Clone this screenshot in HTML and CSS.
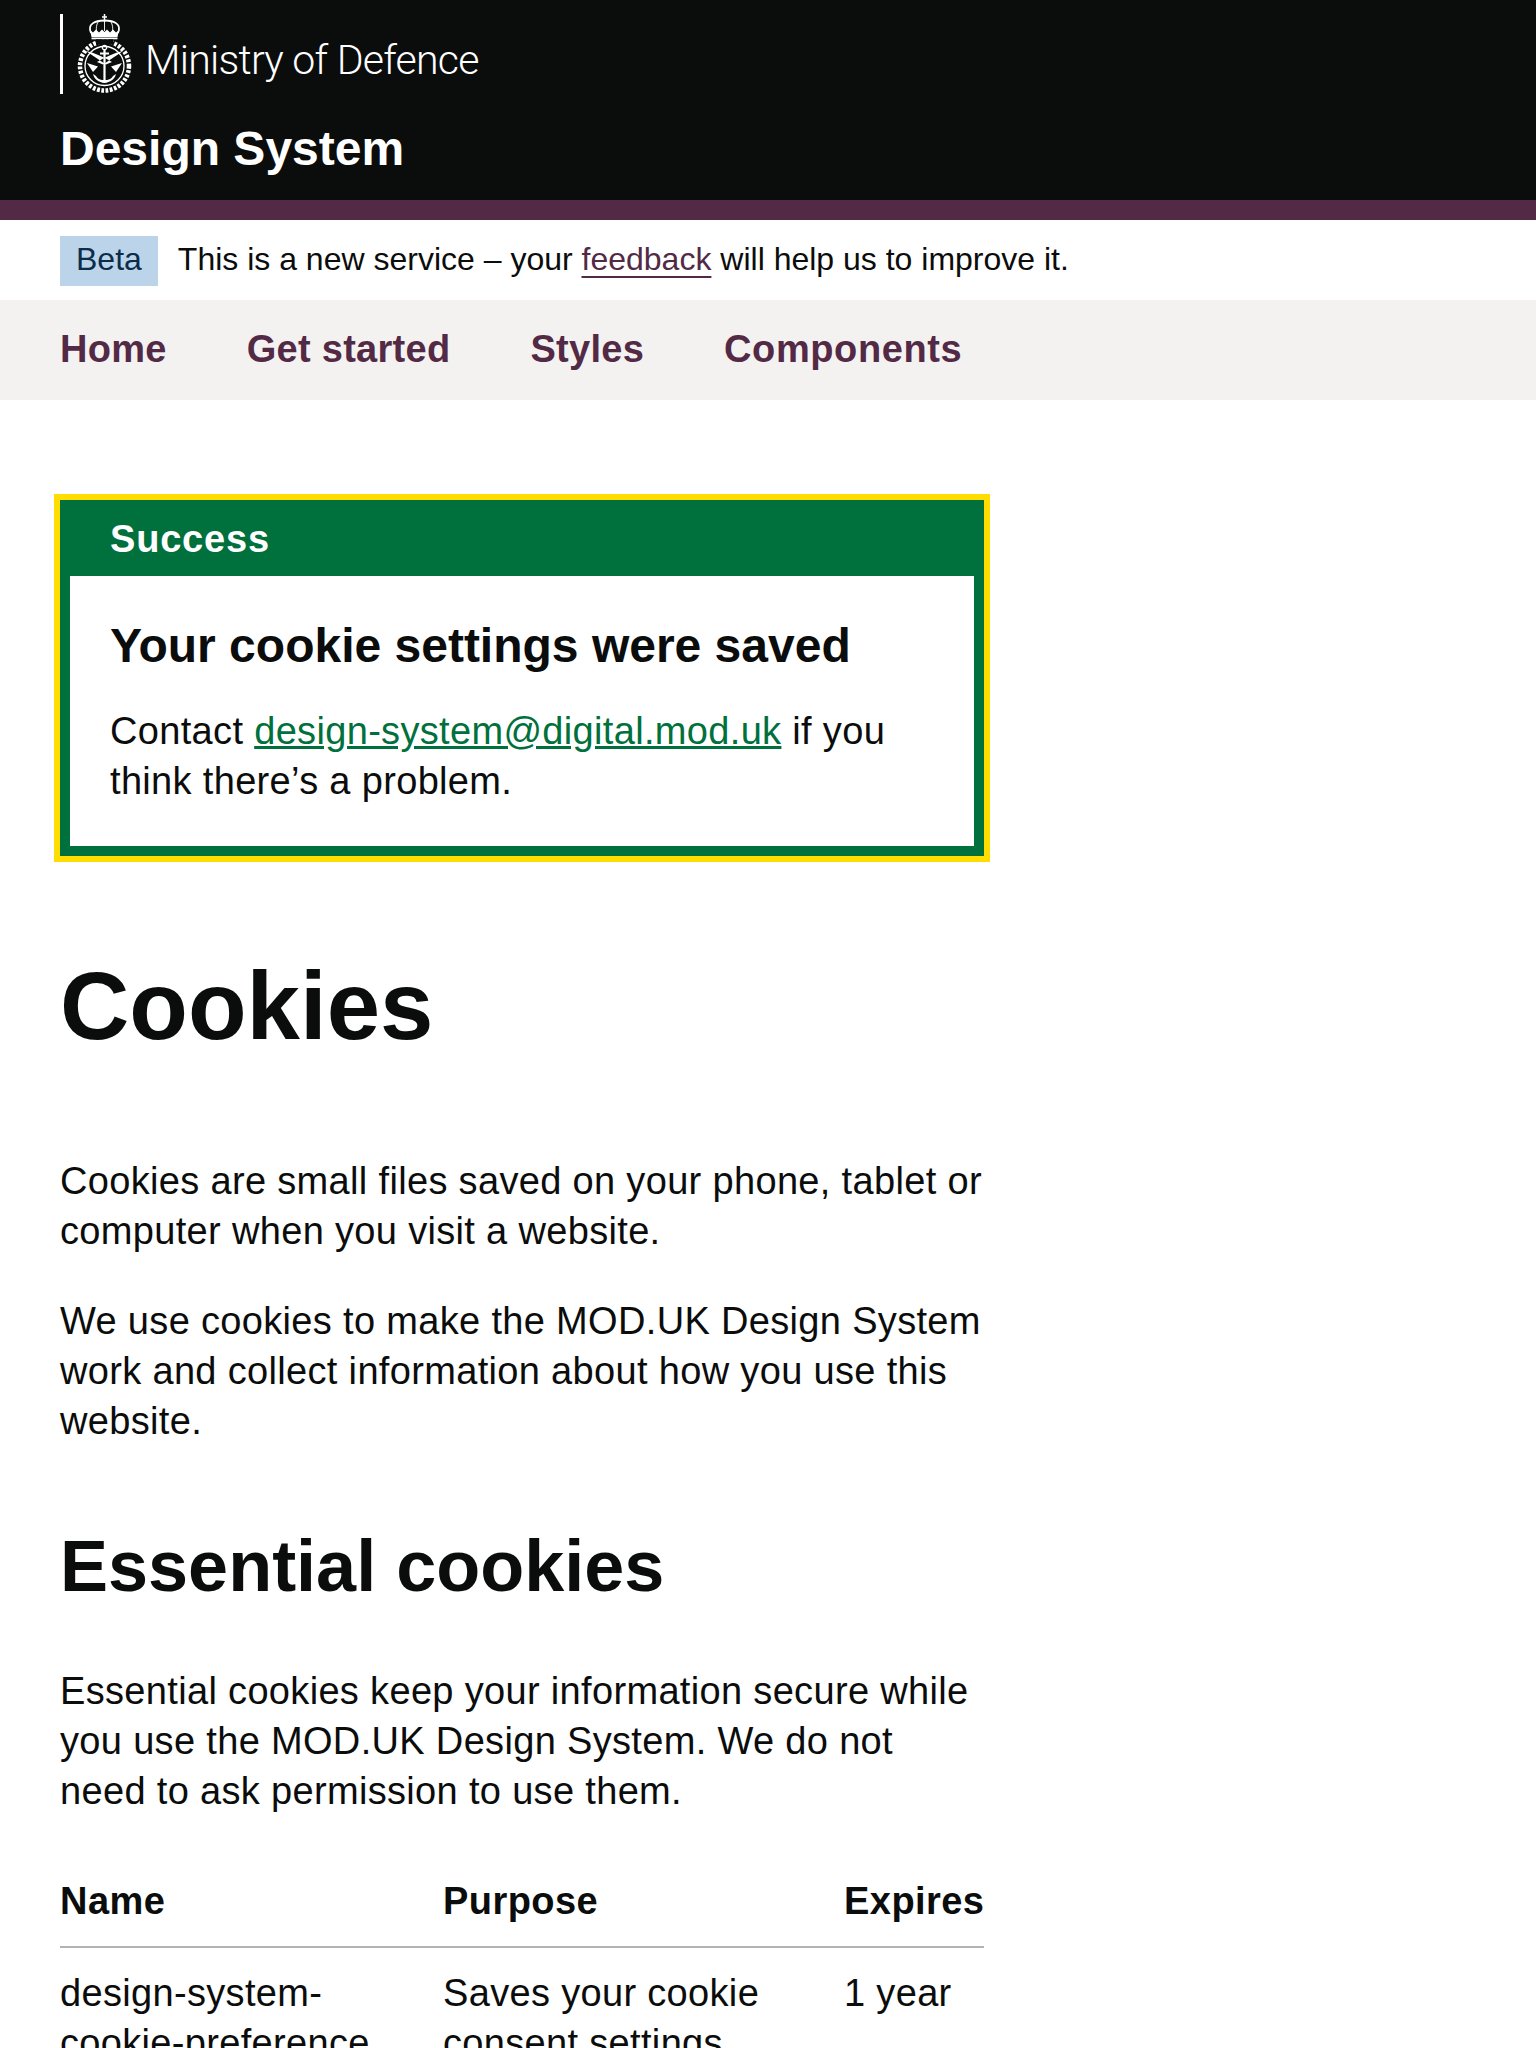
FILE: index.html
```html
<!DOCTYPE html>
<html lang="en">
<head>
    <meta charset="UTF-8">
    <meta name="viewport" content="width=device-width, initial-scale=1.0">
    <title>Cookies - MOD.UK Design System</title>
    <link rel="stylesheet" href="styles.css">
</head>
<body>

    <header class="header">
        <a class="logo" href="#">
            <svg class="crest" viewBox="0 0 56 80" width="56" height="80" aria-hidden="true">
                <!-- crown -->
                <path d="M27.5 0v8M25 3h5" fill="none" stroke="#fff" stroke-width="1.5"/>
                <path d="M14 19C10 10 18 6.500 27.500 6.500S45 10 41 19" fill="none" stroke="#fff" stroke-width="1.800"/>
                <path d="M27.500 8v9M21 8c-1.500 2.500-2 6-1.500 9M34 8c1.500 2.500 2 6 1.500 9" fill="none" stroke="#fff" stroke-width=".9"/>
                <path d="M13 16l3 2.500 3-3 3 3 3-3 2.500 2.500 2.500-2.500 3 3 3-3 3 3 3-2.500-1.500 7h-26z" fill="#fff"/>
                <rect x="14.500" y="23.500" width="26" height="1.800" fill="#fff"/>
                <!-- wreath -->
                <circle cx="27.500" cy="52" r="19.500" fill="none" stroke="#fff" stroke-width="1.300"/>
                <circle cx="27.500" cy="52" r="24.500" fill="none" stroke="#fff" stroke-width="4.500" stroke-dasharray="2.800 1.500"/>
                <rect x="19" y="25.300" width="17" height="5.500" fill="#0b0c0c"/>
                <!-- anchor -->
                <circle cx="27.500" cy="33.500" r="2.200" fill="none" stroke="#fff" stroke-width="1.200"/>
                <path d="M27.500 36v32M23 39.500h9" fill="none" stroke="#fff" stroke-width="2.200"/>
                <path d="M16 60c1 5 6 8.500 11.500 9C33 68.500 38 65 39 60l-3 2c-1 2.500-3.500 3.500-6 4h-5c-2.500-.5-5-1.500-6-4z" fill="#fff"/>
                <!-- swords -->
                <path d="M9 37c9 2 18 6 26 11l-6 2.500c-7-5-14-9-20-13.500zM46 37c-9 2-18 6-26 11l6 2.500c7-5 14-9 20-13.500z" fill="#fff"/>
                <path d="M10 49l11 3.500-5 5.500zM45 49l-11 3.500 5 5.500z" fill="#fff"/>
            </svg>
            <span class="logo-text">Ministry of Defence</span>
        </a>
        <a class="service-name" href="#">Design System</a>
    </header>

    <div class="phase-banner">
        <strong class="tag">Beta</strong>
        <span class="phase-text">This is a new service – your <a href="#">feedback</a> will help us to improve it.</span>
    </div>

    <nav class="nav">
        <a href="#">Home</a>
        <a href="#">Get started</a>
        <a href="#">Styles</a>
        <a class="nav-wide" href="#">Components</a>
    </nav>

    <main class="main">
        <div class="notification">
            <h2 class="notification-title">Success</h2>
            <div class="notification-content">
                <h3>Your cookie settings were saved</h3>
                <p>Contact <a href="#">design-system@digital.mod.uk</a> if you think there’s a problem.</p>
            </div>
        </div>

        <h1>Cookies</h1>

        <p>Cookies are small files saved on your phone, tablet or computer when you visit a website.</p>
        <p>We use cookies to make the MOD.UK Design System work and collect information about how you use this website.</p>

        <h2>Essential cookies</h2>

        <p>Essential cookies keep your information secure while you use the MOD.UK Design System. We do not need to ask permission to use them.</p>

        <table>
            <thead>
                <tr>
                    <th class="col-name">Name</th>
                    <th class="col-purpose">Purpose</th>
                    <th>Expires</th>
                </tr>
            </thead>
            <tbody>
                <tr>
                    <td>design-system-cookie-preference</td>
                    <td>Saves your cookie consent settings</td>
                    <td>1 year</td>
                </tr>
            </tbody>
        </table>
    </main>

</body>
</html>
```

FILE: styles.css
```css
html, body {
    height: 2048px;
    overflow: hidden;
}

body {
    margin: 0;
    font-family: "Liberation Sans", Arial, sans-serif;
    font-size: 38px;
    line-height: 50px;
    letter-spacing: 0.33px;
    color: #0b0c0c;
    background-color: #fff;
}

a {
    color: inherit;
}

.header {
    background-color: #0b0c0c;
    border-bottom: 20px solid #532a45;
    padding: 14px 60px 0;
    height: 186px;
}

.logo {
    display: flex;
    align-items: center;
    gap: 12px;
    height: 80px;
    width: max-content;
    padding-left: 14px;
    border-left: 3px solid #fff;
    text-decoration: none;
}

.logo-text {
    margin-top: 12px;
    font-family: Roboto, "Liberation Sans", sans-serif;
    font-weight: 300;
    font-size: 41px;
    line-height: 44px;
    letter-spacing: -0.75px;
    color: #fff;
}

.service-name {
    display: block;
    margin-top: 25px;
    font-size: 48px;
    line-height: 60px;
    font-weight: 700;
    letter-spacing: 0;
    color: #fff;
    text-decoration: none;
}

.phase-banner {
    display: flex;
    align-items: center;
    gap: 20px;
    height: 80px;
    padding: 0 60px;
    font-size: 32px;
    line-height: 40px;
    letter-spacing: 0;
}

.phase-text {
    margin-bottom: 2px;
}

.phase-banner a {
    color: #532a45;
    text-underline-offset: 6px;
    text-decoration-thickness: 2px;
}

.tag {
    margin-top: 2px;
    padding: 3px 16px 7px;
    font-weight: 400;
    color: #0c2d4a;
    background-color: #bbd4ea;
}

.nav {
    display: flex;
    gap: 80px;
    align-items: center;
    height: 100px;
    padding: 0 60px 2px;
    box-sizing: border-box;
    background-color: #f3f2f1;
    font-weight: 700;
    letter-spacing: 0.28px;
    color: #532a45;
}

.nav a {
    text-decoration: none;
}

.nav .nav-wide {
    letter-spacing: 0.6px;
}

.main {
    width: 924px;
    padding: 100px 60px 0;
}

.notification {
    background-color: #00703c;
    border: 10px solid #00703c;
    outline: 6px solid #ffdd00;
    margin-bottom: 100px;
}

.notification-title {
    margin: 0;
    padding: 0 40px 8px;
    font-size: 38px;
    line-height: 58px;
    font-weight: 700;
    letter-spacing: 0.8px;
    color: #fff;
}

.notification-content {
    padding: 40px;
    background-color: #fff;
}

.notification-content h3 {
    margin: 0 0 30px;
    font-size: 48px;
    line-height: 60px;
    letter-spacing: 0;
}

.notification-content p {
    margin: 0;
}

.notification-content a {
    color: #00703c;
}

h1 {
    margin: 0 0 100px;
    font-size: 96px;
    line-height: 100px;
    letter-spacing: 0;
}

.main > p {
    margin: 0 0 40px;
}

.main > h2 {
    margin: 80px 0 60px;
    font-size: 72px;
    line-height: 80px;
    letter-spacing: 0;
}

table {
    width: 100%;
    table-layout: fixed;
    border-collapse: collapse;
    margin-top: 40px;
}

th, td {
    padding: 20px 40px 20px 0;
    text-align: left;
    vertical-align: top;
}

th {
    border-bottom: 2px solid #b1b4b6;
    letter-spacing: 0.45px;
}

th:last-child, td:last-child {
    padding-right: 0;
}

.col-name {
    width: 343px;
}

.col-purpose {
    width: 361px;
}
```
